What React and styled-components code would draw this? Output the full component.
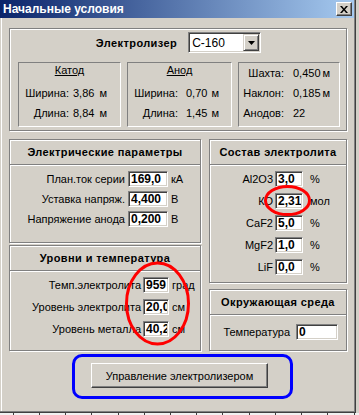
import React from "react";
import styled, { createGlobalStyle } from "styled-components";

const Global = createGlobalStyle`
  html, body { margin: 0; padding: 0; background: #d4d0c8; }
  body {
    font-family: "Liberation Sans", Arial, sans-serif;
    font-size: 11px;
    color: #000;
  }
  * { box-sizing: border-box; }
`;

const Page = styled.div`
  position: relative;
  width: 359px;
  height: 415px;
  overflow: hidden;
`;

const Window = styled.div`
  width: 356px;
  border-right: 1px solid #404040;
  border-bottom: 1px solid #404040;
`;

const Inner = styled.div`
  border-right: 1px solid #808080;
  border-bottom: 1px solid #808080;
`;

const TitleBar = styled.div`
  height: 18px;
  display: flex;
  align-items: center;
  justify-content: space-between;
  padding: 0 2px 0 3px;
  background: linear-gradient(to right, #0a246a, #a6caf0);
  color: #fff;
  font-weight: bold;
  font-size: 12px;
`;

const CloseBtn = styled.div`
  width: 16px;
  height: 14px;
  display: flex;
  align-items: center;
  justify-content: center;
  background: #d4d0c8;
  border: 1px solid;
  border-color: #fff #404040 #404040 #fff;
  box-shadow: inset -1px -1px 0 #808080;
`;

const Body = styled.div`
  height: 393px;
  display: flex;
  flex-direction: column;
  padding: 10px 7px 12px 8px;
  border-left: 1px solid #d4d0c8;
  box-shadow: inset 1px 0 0 #fff;
`;

const Etched = styled.div`
  border: 1px solid #808080;
  box-shadow: inset 1px 1px 0 #fff, 1px 1px 0 #fff;
`;

const Group = styled(Etched)`
  height: 103px;
  padding: 3px 7px 3px 8px;
`;

const HeadRow = styled.div`
  height: 21px;
  margin-bottom: 9px;
  display: flex;
  align-items: center;
  justify-content: center;
  gap: 11px;
`;

const BoldLabel = styled.span`
  font-weight: bold;
  letter-spacing: 0.4px;
`;

const Combo = styled.div`
  width: 73px;
  height: 21px;
  display: flex;
  align-items: center;
  justify-content: space-between;
  padding: 2px 1px 2px 3px;
  background: #fff;
  border: 1px solid;
  border-color: #808080 #fff #fff #808080;
  box-shadow: inset 1px 1px 0 #404040, inset -1px -1px 0 #d4d0c8;
  font-size: 12px;
`;

const DropBtn = styled.div`
  width: 16px;
  height: 17px;
  display: flex;
  align-items: center;
  justify-content: center;
  background: #d4d0c8;
  border: 1px solid;
  border-color: #d4d0c8 #404040 #404040 #d4d0c8;
  box-shadow: inset 1px 1px 0 #fff, inset -1px -1px 0 #808080;
`;

const SubRow = styled.div`
  display: grid;
  grid-template-columns: 103px 105px 102px;
  column-gap: 6px;
`;

const Sunken = styled.div`
  height: 65px;
  padding-top: ${(p) => p.pt}px;
  border: 1px solid;
  border-color: #808080 #fff #fff #808080;
`;

const SubTitle = styled.div`
  line-height: 14px;
  margin-bottom: 9px;
  text-align: center;
  text-decoration: underline;
`;

const Pairs = styled.div`
  display: grid;
  grid-template-columns: ${(p) => p.lw}px auto;
  column-gap: ${(p) => p.gap}px;
  row-gap: 6px;
  line-height: 14px;
`;

const PairLabel = styled.span`
  text-align: right;
`;

const PairValue = styled.span`
  display: flex;
  gap: ${(p) => p.ug}px;
`;

const Columns = styled.div`
  margin-top: 8px;
  display: grid;
  grid-template-columns: 192px 138px;
  column-gap: 8px;
`;

const Stack = styled.div`
  display: flex;
  flex-direction: column;
  gap: ${(p) => p.gap}px;
`;

const Section = styled(Etched)`
  height: ${(p) => p.h}px;
`;

const SectionTitle = styled.div`
  height: 25px;
  line-height: 24px;
  border-bottom: 1px solid #808080;
  box-shadow: 0 1px 0 #fff;
  text-align: center;
  font-weight: bold;
  letter-spacing: 0.4px;
`;

const Form = styled.div`
  display: grid;
  grid-template-columns: ${(p) => p.lw}px ${(p) => p.iw}px auto;
  row-gap: ${(p) => p.rg}px;
  padding-top: ${(p) => p.pt}px;
  align-items: center;
`;

const FormLabel = styled.span`
  text-align: right;
  white-space: nowrap;
  padding-right: ${(p) => p.pr}px;
`;

const Field = styled.input`
  width: 100%;
  height: 16px;
  padding: 0 1px 0 2px;
  margin: 0;
  background: #fff;
  border: 1px solid;
  border-color: #808080 #fff #fff #808080;
  box-shadow: inset 1px 1px 0 #404040, inset -1px -1px 0 #d4d0c8;
  font: bold 12px "Liberation Sans", Arial, sans-serif;
  color: #000;
  outline: none;
`;

const UnitText = styled.span`
  padding-left: ${(p) => p.pl}px;
  white-space: nowrap;
`;

const Highlight = styled.div`
  align-self: flex-start;
  margin: 3px 0 0 63px;
  width: 221px;
  height: 45px;
  padding: 6px 0 0 16px;
  border: 3px solid #0000ff;
  border-radius: 10px;
`;

const PushButton = styled.button`
  width: 177px;
  height: 25px;
  padding: 0;
  background: #d4d0c8;
  border: 1px solid;
  border-color: #fff #404040 #404040 #fff;
  box-shadow: inset -1px -1px 0 #808080;
  font: 11px "Liberation Sans", Arial, sans-serif;
  color: #000;
`;

const Ruler = styled.div`
  width: 359px;
  height: 2px;
  background: repeating-linear-gradient(
    to right,
    #f2f2f2 0 12.6px,
    #404040 12.6px 13.6px,
    #f2f2f2 13.6px 26.23px
  );
`;

const Marks = styled.svg`
  position: absolute;
  left: 0;
  top: 0;
  pointer-events: none;
`;

function FormBlock({ rows, lw, iw, lp, up, rg, pt }) {
  return (
    <Form lw={lw} iw={iw} rg={rg} pt={pt}>
      {rows.map(([label, value, unit]) => (
        <React.Fragment key={label}>
          <FormLabel pr={lp}>{label}</FormLabel>
          <Field readOnly value={value} />
          <UnitText pl={up}>{unit}</UnitText>
        </React.Fragment>
      ))}
    </Form>
  );
}

function PairBlock({ rows, lw, gap, ug }) {
  return (
    <Pairs lw={lw} gap={gap}>
      {rows.map(([label, value, unit]) => (
        <React.Fragment key={label}>
          <PairLabel>{label}</PairLabel>
          <PairValue ug={ug}>
            <span>{value}</span>
            {unit && <span>{unit}</span>}
          </PairValue>
        </React.Fragment>
      ))}
    </Pairs>
  );
}

export default function App() {
  return (
    <Page>
      <Global />
      <Window>
        <Inner>
          <TitleBar>
            <span>Начальные условия</span>
            <CloseBtn>
              <svg width="8" height="7" viewBox="0 0 8 7">
                <path d="M0 0h2l2 2.5L6 0h2L5 3.5 8 7H6L4 4.5 2 7H0l3-3.5z" fill="#000" />
              </svg>
            </CloseBtn>
          </TitleBar>
          <Body>
            <Group>
              <HeadRow>
                <BoldLabel>Электролизер</BoldLabel>
                <Combo>
                  <span>С-160</span>
                  <DropBtn>
                    <svg width="7" height="4" viewBox="0 0 7 4">
                      <path d="M0 0h7L3.5 4z" fill="#000" />
                    </svg>
                  </DropBtn>
                </Combo>
              </HeadRow>
              <SubRow>
                <Sunken pt={0}>
                  <SubTitle>Катод</SubTitle>
                  <PairBlock
                    lw={50}
                    gap={4}
                    ug={5}
                    rows={[
                      ["Ширина:", "3,86", "м"],
                      ["Длина:", "8,84", "м"],
                    ]}
                  />
                </Sunken>
                <Sunken pt={0}>
                  <SubTitle>Анод</SubTitle>
                  <PairBlock
                    lw={50}
                    gap={8}
                    ug={4}
                    rows={[
                      ["Ширина:", "0,70", "м"],
                      ["Длина:", "1,45", "м"],
                    ]}
                  />
                </Sunken>
                <Sunken pt={3}>
                  <PairBlock
                    lw={45}
                    gap={9}
                    ug={2}
                    rows={[
                      ["Шахта:", "0,450", "м"],
                      ["Наклон:", "0,185", "м"],
                      ["Анодов:", "22", ""],
                    ]}
                  />
                </Sunken>
              </SubRow>
            </Group>

            <Columns>
              <Stack gap={2}>
                <Section h={104}>
                  <SectionTitle>Электрические параметры</SectionTitle>
                  <FormBlock
                    lw={118}
                    iw={40}
                    lp={3}
                    up={3}
                    rg={4}
                    pt={6}
                    rows={[
                      ["План.ток серии", "169,0", "кА"],
                      ["Уставка напряж.", "4,400", "В"],
                      ["Напряжение анода", "0,200", "В"],
                    ]}
                  />
                </Section>
                <Section h={106}>
                  <SectionTitle>Уровни и температура</SectionTitle>
                  <FormBlock
                    lw={133}
                    iw={26}
                    lp={2}
                    up={3}
                    rg={6}
                    pt={6}
                    rows={[
                      ["Темп.электролита", "959", "град"],
                      ["Уровень электролита", "20,0", "см"],
                      ["Уровень металла", "40,2", "см"],
                    ]}
                  />
                </Section>
              </Stack>
              <Stack gap={6}>
                <Section h={144}>
                  <SectionTitle>Состав электролита</SectionTitle>
                  <FormBlock
                    lw={65}
                    iw={28}
                    lp={2}
                    up={7}
                    rg={6}
                    pt={6}
                    rows={[
                      ["Al2O3", "3,0", "%"],
                      ["КО", "2,31", "мол"],
                      ["CaF2", "5,0", "%"],
                      ["MgF2", "1,0", "%"],
                      ["LiF", "0,0", "%"],
                    ]}
                  />
                </Section>
                <Section h={62}>
                  <SectionTitle>Окружающая среда</SectionTitle>
                  <FormBlock
                    lw={86}
                    iw={42}
                    lp={6}
                    up={0}
                    rg={0}
                    pt={9}
                    rows={[["Температура", "0", ""]]}
                  />
                </Section>
              </Stack>
            </Columns>

            <Highlight>
              <PushButton>Управление электролизером</PushButton>
            </Highlight>
          </Body>
        </Inner>
      </Window>
      <Ruler />
      <Marks width="359" height="415" viewBox="0 0 359 415">
        <ellipse cx="287.5" cy="200.5" rx="22" ry="14" fill="none" stroke="#ff0000" strokeWidth="3" />
        <ellipse cx="157.5" cy="303.5" rx="31" ry="40.5" fill="none" stroke="#ff0000" strokeWidth="3" />
      </Marks>
    </Page>
  );
}
